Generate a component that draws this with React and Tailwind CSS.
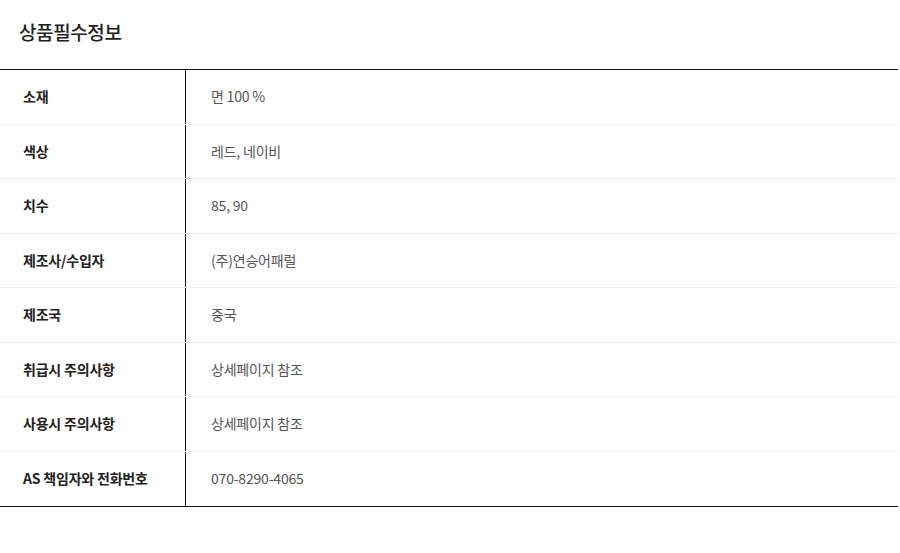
import React from 'react';

const rows = [
  ['소재', '면 100 %'],
  ['색상', '레드, 네이비'],
  ['치수', '85, 90'],
  ['제조사/수입자', '(주)연승어패럴'],
  ['제조국', '중국'],
  ['취급시 주의사항', '상세페이지 참조'],
  ['사용시 주의사항', '상세페이지 참조'],
  ['AS 책임자와 전화번호', '070-8290-4065'],
];

export default function App() {
  return (
    <div className="w-[900px] h-[553px] bg-white font-['Noto_Sans_CJK_KR','Noto_Sans',sans-serif]">
      {/* Title */}
      <div className="h-[69px] pl-[19px] pt-[18px]">
        <h2 className="text-[19px] leading-[28px] font-medium text-[#222] tracking-[-0.4px]">상품필수정보</h2>
      </div>
      {/* Table */}
      <div className="w-[898px] border-t border-b border-[#111]">
        {rows.map(([label, value], i) => (
          <div
            key={label}
            className={'flex h-[54.5px] ' + (i < rows.length - 1 ? 'border-b border-[#eeeeee]' : '')}
          >
            <div className="w-[186px] shrink-0 border-r border-[#111] flex items-center pl-[23px] text-[14px] font-bold text-[#222] tracking-[-0.2px]">
              {label}
            </div>
            <div className="flex-1 flex items-center pl-[25px] text-[14px] text-[#555] tracking-[-0.2px]">
              {value}
            </div>
          </div>
        ))}
      </div>
    </div>
  );
}
